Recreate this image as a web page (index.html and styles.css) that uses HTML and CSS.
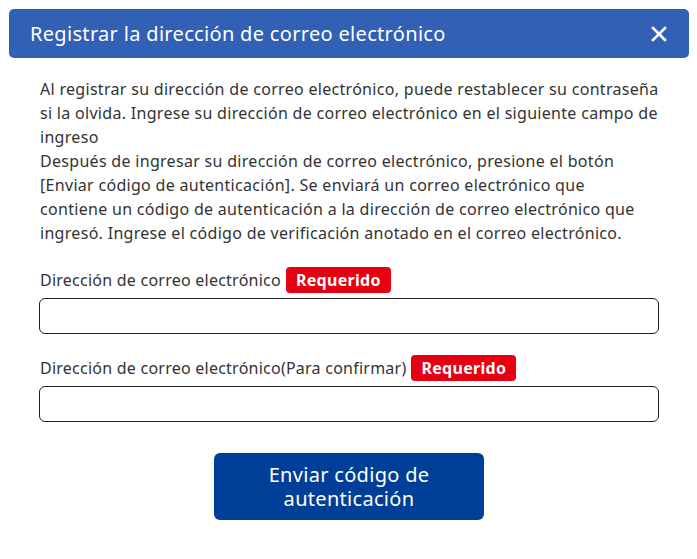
FILE: index.html
```html
<!DOCTYPE html>
<html lang="es">
<head>
<meta charset="utf-8">
<title>Registrar la dirección de correo electrónico</title>
<link rel="stylesheet" href="styles.css">
</head>
<body>
<div class="dialog">
  <div class="dialog-header">
    <h1 class="dialog-title">Registrar la dirección de correo electrónico</h1>
    <button class="close-btn" aria-label="Cerrar">
      <svg width="16" height="16" viewBox="0 0 16 16"><path d="M2 2 L14 14 M14 2 L2 14" stroke="#fff" stroke-width="2.6" stroke-linecap="square" fill="none"/></svg>
    </button>
  </div>
  <div class="dialog-body">
    <p class="intro">Al registrar su dirección de correo electrónico, puede restablecer su contraseña si la olvida. Ingrese su dirección de correo electrónico en el siguiente campo de ingreso<br>Después de ingresar su dirección de correo electrónico, presione el botón [Enviar código de autenticación]. Se enviará un correo electrónico que<br>contiene un código de autenticación a la dirección de correo electrónico que ingresó. Ingrese el código de verificación anotado en el correo electrónico.</p>
    <div class="field">
      <label class="field-label">Dirección de correo electrónico <span class="badge">Requerido</span></label>
      <input class="field-input" type="email">
    </div>
    <div class="field">
      <label class="field-label">Dirección de correo electrónico(Para confirmar) <span class="badge">Requerido</span></label>
      <input class="field-input" type="email">
    </div>
    <div class="actions">
      <button class="send-btn"><span class="send-line">Enviar código de</span><span class="send-line">autenticación</span></button>
    </div>
  </div>
</div>
</body>
</html>
```
FILE: styles.css
```css
html, body {
  margin: 0;
  padding: 0;
  background: #fff;
}
body {
  font-family: "Noto Sans", "DejaVu Sans", sans-serif;
  color: #333;
}
.dialog {
  padding: 9px 8px 0 9px;
}
.dialog-header {
  height: 49px;
  background: #3160b5;
  border-radius: 5px;
  display: flex;
  align-items: center;
  justify-content: space-between;
  padding: 0 22px 0 21px;
}
.dialog-title {
  margin: 0;
  font-size: 20px;
  font-weight: normal;
  color: #fff;
  letter-spacing: 0.32px;
}
.close-btn {
  background: none;
  border: 0;
  padding: 0;
  width: 16px;
  height: 16px;
  display: flex;
}
.dialog-body {
  padding: 19px 30px 0 30px;
}
.intro {
  margin: 0 0 22px 1px;
  font-size: 16px;
  line-height: 24px;
  letter-spacing: 0.3px;
}
.field {
  margin-bottom: 21px;
}
.field-label {
  display: flex;
  align-items: center;
  gap: 5px;
  font-size: 16px;
  letter-spacing: 0.24px;
  margin-left: 1px;
  margin-bottom: 5px;
  height: 26px;
}
.badge {
  background: #e60012;
  color: #fff;
  font-weight: bold;
  letter-spacing: 0.3px;
  border-radius: 4px;
  padding: 0 10px;
  height: 26px;
  line-height: 26px;
  display: inline-block;
}
.field-input {
  display: block;
  box-sizing: border-box;
  width: 620px;
  height: 36px;
  border: 1px solid #222;
  border-radius: 6px;
  margin: 0;
}
.actions {
  display: flex;
  justify-content: center;
  padding-top: 10px;
}
.send-btn {
  width: 270px;
  height: 67px;
  background: #003f98;
  color: #fff;
  border: 0;
  border-radius: 6px;
  font-family: inherit;
  font-size: 20px;
  letter-spacing: 0.3px;
  padding: 0;
  display: flex;
  flex-direction: column;
  align-items: center;
  justify-content: center;
}
.send-line {
  display: block;
  line-height: 24px;
  height: 24px;
}
```
